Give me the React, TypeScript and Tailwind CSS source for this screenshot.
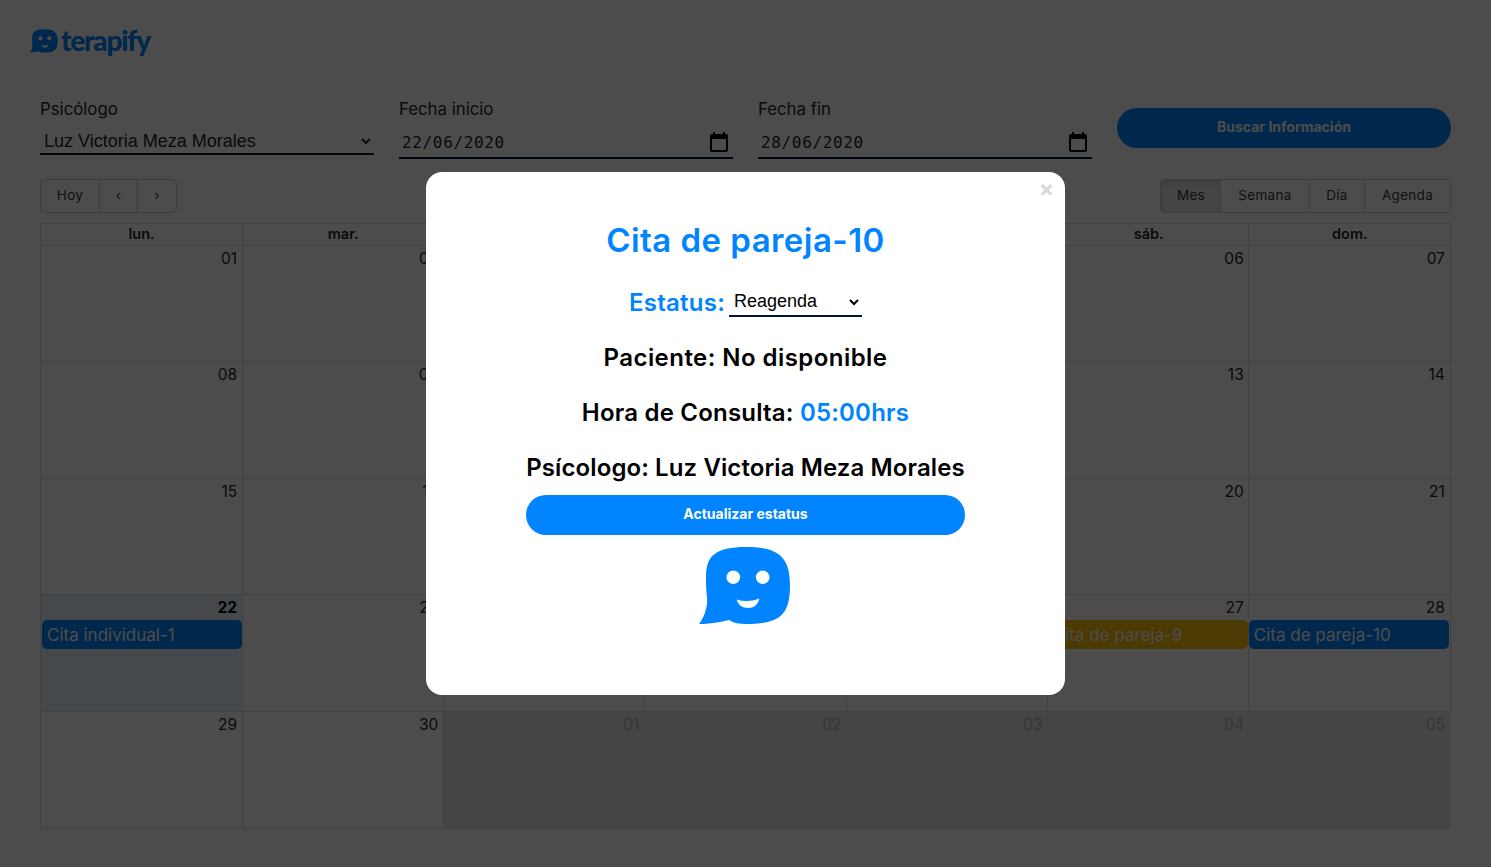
import React from "react";

const Bubble = ({ className }: { className: string }) => (
  <svg viewBox="0 0 92 78" className={className}>
    <path
      fill="currentColor"
      fillRule="evenodd"
      d="M7 30 C7 9 16 0 47 0 C79 0 91 10 91 38 C91 68 81 77 47 77 C40 77 35 76 30 73 C22 75 10 77 0 77 C5 70 9 60 8 50 C7 43 7 37 7 30 Z"
    />
    <circle cx="34.3" cy="30.3" r="6.8" fill="var(--face)" />
    <circle cx="63.7" cy="30.3" r="6.8" fill="var(--face)" />
    <path d="M37.5 52.5 Q49 56 60.5 51.5 Q58 61 49 61 Q40 61 37.5 52.5Z" fill="var(--face)" />
  </svg>
);

const Cal = () => (
  <svg viewBox="0 0 24 24" className="w-[24px] h-[24px] -mt-[2px] text-black" fill="currentColor">
    <path d="M19 4h-1V2h-2v2H8V2H6v2H5a2 2 0 0 0-2 2v14a2 2 0 0 0 2 2h14a2 2 0 0 0 2-2V6a2 2 0 0 0-2-2zm0 16H5V9h14v11z" />
  </svg>
);

const rows: { n: string; off?: boolean; today?: boolean; ev?: string; yellow?: boolean }[][] = [
  ["01", "02", "03", "04", "05", "06", "07"].map((n) => ({ n })),
  ["08", "09", "10", "11", "12", "13", "14"].map((n) => ({ n })),
  ["15", "16", "17", "18", "19", "20", "21"].map((n) => ({ n })),
  [
    { n: "22", today: true, ev: "Cita individual-1" },
    { n: "23" },
    { n: "24" },
    { n: "25" },
    { n: "26" },
    { n: "27", ev: "Cita de pareja-9", yellow: true },
    { n: "28", ev: "Cita de pareja-10" },
  ],
  [
    { n: "29" },
    { n: "30" },
    { n: "01", off: true },
    { n: "02", off: true },
    { n: "03", off: true },
    { n: "04", off: true },
    { n: "05", off: true },
  ],
];

const rowHeights = ["h-[115px]", "h-[117px]", "h-[116px]", "h-[117px]", "h-[117px]"];
const days = ["lun.", "mar.", "mié.", "jue.", "vie.", "sáb.", "dom."];

const DateField = ({ label, value }: { label: string; value: string }) => (
  <div>
    <div className="h-[18px] mt-[1px] text-[16.8px] leading-[18px] text-[#212529]">{label}</div>
    <div className="mt-[10px] h-[31px] border-b-2 border-[#001a33] flex items-center justify-between pl-[3px] pr-[2px]">
      <span className="font-['DejaVu_Sans_Mono',monospace] text-[16px] text-[#212529] tracking-[0.65px]">{value}</span>
      <Cal />
    </div>
  </div>
);

export default function App() {
  return (
    <div className="relative h-[867px] w-[1491px] overflow-hidden bg-white font-['Inter',sans-serif] text-[#212529]">
      <div className="px-[40px]">
        <div className="h-[99px] -ml-[10px] pt-[26px] flex items-start gap-[3px] text-[#0084ff]">
          <Bubble className="w-[28px] h-[24px] mt-[3px] [--face:#fff]" />
          <span className="font-['Lato',sans-serif] font-black text-[28px] leading-[28px] tracking-[-1.2px]">terapify</span>
        </div>

        <div className="grid grid-cols-4 gap-[25px] h-[80px]">
          <div>
            <div className="h-[18px] mt-[1px] text-[16.8px] leading-[18px]">Psicólogo</div>
            <select className="mt-[10px] w-full h-[27px] pr-[1px] border-b-2 border-[#001a33] bg-transparent text-[18px] font-['Liberation_Sans',sans-serif] text-[#212529] outline-none">
              <option>Luz Victoria Meza Morales</option>
            </select>
          </div>
          <DateField label="Fecha inicio" value="22/06/2020" />
          <DateField label="Fecha fin" value="28/06/2020" />
          <div className="pt-[9px]">
            <div className="h-[40px] pb-[3px] rounded-[20px] bg-[#0084ff] flex items-center justify-center text-white text-[14px] font-bold">
              Buscar Información
            </div>
          </div>
        </div>

        <div className="flex justify-between h-[34px] text-[13.5px] tracking-[0.3px] text-[#373a3c]">
          <div className="flex border border-[#ccc] rounded-[4px]">
            <div className="w-[58px] pb-[1px] flex items-center justify-center">Hoy</div>
            <div className="w-[38px] pb-[1px] flex items-center justify-center border-l border-[#ccc]">‹</div>
            <div className="w-[39px] pb-[1px] flex items-center justify-center border-l border-[#ccc]">›</div>
          </div>
          <div className="flex border border-[#ccc] rounded-[4px]">
            <div className="w-[60px] pb-[1px] flex items-center justify-center bg-[#e6e6e6] shadow-[inset_0_3px_5px_rgba(0,0,0,0.125)] rounded-l-[4px]">Mes</div>
            <div className="w-[88px] pb-[1px] flex items-center justify-center">Semana</div>
            <div className="w-[55px] pb-[1px] flex items-center justify-center border-l border-[#ccc]">Día</div>
            <div className="w-[86px] pb-[1px] flex items-center justify-center border-l border-[#ccc]">Agenda</div>
          </div>
        </div>

        <div className="mt-[10px] h-[606px] w-[1411px] border border-[#ddd] flex flex-col">
          <div className="grid grid-cols-[repeat(7,201.14px)] h-[22px] border-b border-[#ddd]">
            {days.map((d, i) => (
              <div
                key={d}
                className={`text-center text-[14.5px] font-semibold leading-[20px] ${i ? "border-l border-[#ddd]" : ""} ${i >= 5 ? "pl-[2px]" : ""}`}
              >
                {d}
              </div>
            ))}
          </div>
          {rows.map((row, r) => (
            <div key={r} className={`grid grid-cols-[repeat(7,201.14px)] ${rowHeights[r]} ${r ? "border-t border-[#ddd]" : ""}`}>
              {row.map((c, i) => (
                <div
                  key={i}
                  className={`${i ? "border-l border-[#ddd]" : ""} ${c.off ? "bg-[#e6e6e6]" : ""} ${c.today ? "bg-[#eaf6ff]" : ""}`}
                >
                  <div
                    className={`text-right ${i >= 3 ? "pr-[4px]" : "pr-[5px]"} h-[25px] text-[15.5px] leading-[25px] ${c.off ? "text-[#adb5bd]" : ""} ${c.today ? "font-bold text-black" : ""}`}
                  >
                    {c.n}
                  </div>
                  {c.ev && (
                    <div
                      className={`${c.yellow ? "bg-[#ffc107]" : "bg-[#0084ff]"} ${i ? "" : "ml-[1px]"} h-[29px] w-[200px] rounded-[5px] pl-[5px] pt-[1px] text-white text-[17px] leading-[28px]`}
                    >
                      {c.ev}
                    </div>
                  )}
                </div>
              ))}
            </div>
          ))}
        </div>
      </div>

      <div className="fixed inset-0 bg-black/70 flex items-center justify-center">
        <div className="relative w-[639px] h-[523px] bg-white rounded-[16px] flex flex-col items-center pt-[46px]">
          <span className="absolute right-[11px] top-[4px] text-[#d9d9d9] text-[22px] font-extrabold leading-[24px]">×</span>
          <h2 className="text-[33px] leading-[44px] font-semibold text-[#0084ff] tracking-[0.45px]">Cita de pareja-10</h2>
          <div className="mt-[21px] h-[40px] flex items-center gap-[4px]">
            <span className="text-[24px] font-semibold text-[#0084ff] tracking-[0.25px]">Estatus:</span>
            <select className="w-[133px] h-[30px] pl-[1px] pr-[1px] border-b-2 border-[#001a33] bg-transparent text-[18px] font-['Liberation_Sans',sans-serif] text-black outline-none -mt-[2px]">
              <option>Reagenda</option>
            </select>
          </div>
          <p className="mt-[15px] h-[40px] text-[24px] leading-[40px] font-semibold text-black tracking-[0.45px]">Paciente: No disponible</p>
          <p className="mt-[15px] h-[40px] text-[24px] leading-[40px] font-semibold text-black tracking-[0.2px]">
            Hora de Consulta: <span className="text-[#0084ff]">05:00hrs</span>
          </p>
          <p className="mt-[15px] h-[40px] text-[24px] leading-[40px] font-semibold text-black whitespace-nowrap tracking-[0.1px]">Psícologo: Luz Victoria Meza Morales</p>
          <div className="mt-[7px] w-[439px] h-[40px] pb-[3px] rounded-[20px] bg-[#0084ff] flex items-center justify-center text-white text-[14px] font-bold">
            Actualizar estatus
          </div>
          <Bubble className="mt-[12px] -ml-[1px] w-[92px] h-[78px] text-[#0084ff] [--face:#fff]" />
        </div>
      </div>
    </div>
  );
}
